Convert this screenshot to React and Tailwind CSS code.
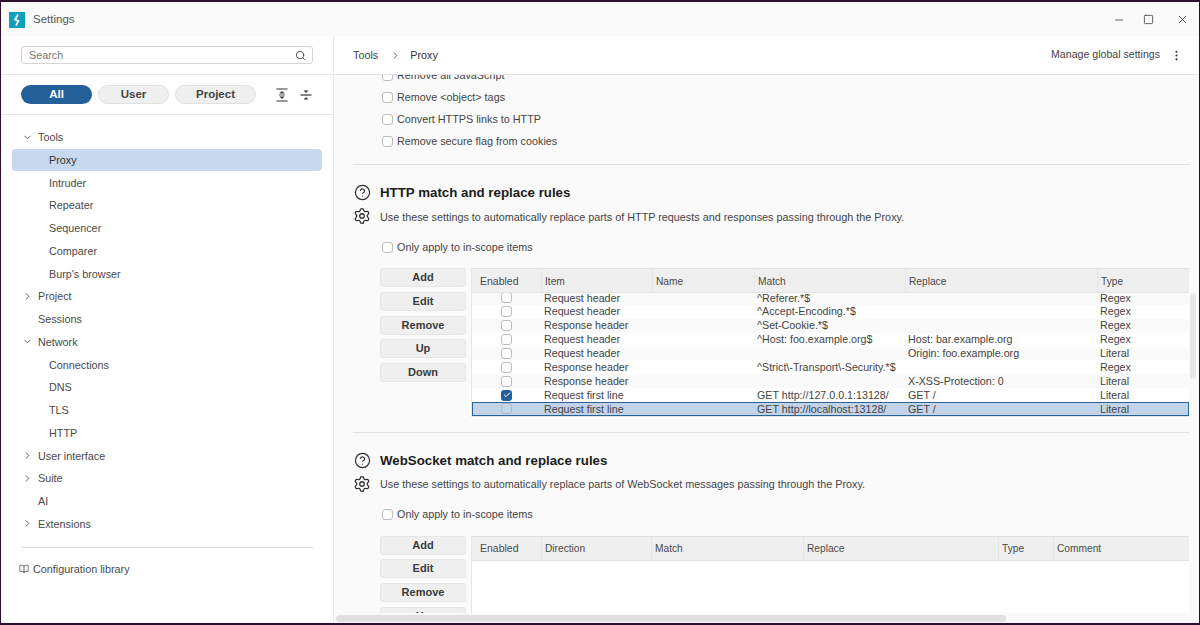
import { BookOpen, Check, ChevronDown, ChevronRight, EllipsisVertical, Minus, Search, Settings, CircleHelp, Square, X } from "lucide-react";

const NAV = [
  { label: "Tools", level: 0, arrow: "down" },
  { label: "Proxy", level: 1, active: true },
  { label: "Intruder", level: 1 },
  { label: "Repeater", level: 1 },
  { label: "Sequencer", level: 1 },
  { label: "Comparer", level: 1 },
  { label: "Burp's browser", level: 1 },
  { label: "Project", level: 0, arrow: "right" },
  { label: "Sessions", level: 0 },
  { label: "Network", level: 0, arrow: "down" },
  { label: "Connections", level: 1 },
  { label: "DNS", level: 1 },
  { label: "TLS", level: 1 },
  { label: "HTTP", level: 1 },
  { label: "User interface", level: 0, arrow: "right" },
  { label: "Suite", level: 0, arrow: "right" },
  { label: "AI", level: 0 },
  { label: "Extensions", level: 0, arrow: "right" }
];

const RULES = [
  ["Request header", "^Referer.*$", "", "Regex"],
  ["Request header", "^Accept-Encoding.*$", "", "Regex"],
  ["Response header", "^Set-Cookie.*$", "", "Regex"],
  ["Request header", "^Host: foo.example.org$", "Host: bar.example.org", "Regex"],
  ["Request header", "", "Origin: foo.example.org", "Literal"],
  ["Response header", "^Strict\\-Transport\\-Security.*$", "", "Regex"],
  ["Response header", "", "X-XSS-Protection: 0", "Literal"],
  ["Request first line", "GET http://127.0.0.1:13128/", "GET /", "Literal"],
  ["Request first line", "GET http://localhost:13128/", "GET /", "Literal"]
];

const HTTP_COLUMNS = ["Enabled", "Item", "Name", "Match", "Replace", "Type"];
const WS_COLUMNS = ["Enabled", "Direction", "Match", "Replace", "Type", "Comment"];

function Box({ checked, faint }) {
  if (checked) {
    return (
      <span className="flex h-[11px] w-[11px] items-center justify-center rounded-[3px] bg-[#23609a]">
        <Check size={8} strokeWidth={3} className="text-white" />
      </span>
    );
  }
  return (
    <span className={`block h-[11px] w-[11px] rounded-[3px] border ${faint ? "border-[#aab9cf]" : "border-[#bdbdbd] bg-white"}`} />
  );
}

function CheckRow({ label }) {
  return (
    <div className="flex h-[22px] items-center gap-[4px] pl-[29px] text-[10.8px] text-[#444]">
      <Box />
      <span>{label}</span>
    </div>
  );
}

function SideButton({ label }) {
  return (
    <button type="button" className="h-[19px] w-[86px] shrink-0 rounded-[3px] border border-[#e6e6e6] bg-[#efefef] text-[11px] font-bold leading-none text-[#3b3b3b]">
      {label}
    </button>
  );
}

function SectionHead({ title, text }) {
  return (
    <div className="flex">
      <div className="flex w-[27px] shrink-0 flex-col items-center gap-[6px] pr-[9px] pt-[19px] text-[#2e2e2e]">
        <CircleHelp size={17} strokeWidth={1.7} />
        <Settings size={18} strokeWidth={1.7} />
      </div>
      <div className="pt-[18px]">
        <h2 className="flex h-[20px] items-center text-[13.3px] font-bold text-[#1c1c1c]">{title}</h2>
        <p className="mt-[4px] flex h-[20px] items-center text-[10.8px] text-[#444]">{text}</p>
      </div>
    </div>
  );
}

function TableHeader({ columns, template }) {
  return (
    <div className={`grid h-[25px] border-y border-[#e2e2e2] bg-[#efefef] ${template}`}>
      {columns.map((col, i) => (
        <div key={col} className={`flex items-center pl-[3px] pt-[2px] text-[10.2px] text-[#4a4a4a] ${i === 0 ? "pl-[8px] text-[10.5px]" : "border-l border-[#e4e4e4]"}`}>
          {col}
        </div>
      ))}
    </div>
  );
}

function ExpandIcon() {
  return (
    <svg width="12" height="14" viewBox="0 0 12 14" className="text-[#333]">
      <path d="M0.5 1h11M0.5 13h11" stroke="currentColor" strokeWidth="1.2" />
      <path d="M6 3l2.6 2.6H3.4zM6 11l2.6-2.6H3.4z" fill="currentColor" />
      <path d="M3 7h6" stroke="currentColor" strokeWidth="0.8" />
    </svg>
  );
}

function CollapseIcon() {
  return (
    <svg width="12" height="14" viewBox="0 0 12 14" className="text-[#333]">
      <path d="M0.5 7h11" stroke="currentColor" strokeWidth="1.2" />
      <path d="M6 5l2.4-2.6H3.6zM6 9l2.4 2.6H3.6z" fill="currentColor" />
    </svg>
  );
}

function Sidebar() {
  return (
    <aside className="flex w-[333px] shrink-0 flex-col border-r border-[#e8e8e8] bg-white">
      <div className="flex h-[39px] items-center border-b border-[#e6e6e6] px-[20px]">
        <div className="flex h-[18px] w-[292px] items-center justify-between rounded-[3px] border border-[#d4d4d4] bg-white pl-[7px] pr-[6px]">
          <span className="text-[10.8px] text-[#777]">Search</span>
          <Search size={11} className="text-[#444]" />
        </div>
      </div>
      <div className="flex h-[40px] items-center border-b border-[#e6e6e6] pl-[20px]">
        <button type="button" className="h-[19px] w-[71px] rounded-full bg-[#23609a] text-[11.5px] font-bold text-white">All</button>
        <button type="button" className="ml-[6px] h-[19px] w-[71px] rounded-full border border-[#e2e2e2] bg-[#efefef] text-[11.5px] font-bold text-[#444]">User</button>
        <button type="button" className="ml-[6px] h-[19px] w-[81px] rounded-full border border-[#e2e2e2] bg-[#efefef] text-[11.5px] font-bold text-[#444]">Project</button>
        <div className="ml-[20px] flex items-center gap-[12px]">
          <ExpandIcon />
          <CollapseIcon />
        </div>
      </div>
      <nav className="px-[11px] pt-[10.75px]">
        {NAV.map((item) => (
          <div
            key={item.label}
            className={`flex h-[22.75px] items-center rounded-[4px] text-[10.8px] text-[#4a4a4a] ${item.active ? "bg-[#c8d9ef] text-[#333]" : ""} ${item.level === 1 ? "pl-[37px]" : "pl-[10px]"}`}
          >
            {item.level === 0 && (
              <span className="flex w-[16px] shrink-0 items-center">
                {item.arrow === "down" && <ChevronDown size={11} strokeWidth={1.8} className="text-[#444]" />}
                {item.arrow === "right" && <ChevronRight size={11} strokeWidth={1.8} className="text-[#444]" />}
              </span>
            )}
            {item.label}
          </div>
        ))}
      </nav>
      <div className="mx-[20px] mt-[11.75px] border-t border-[#dcdcdc]" />
      <div className="mx-[11px] mt-[10px] flex h-[22px] items-center gap-[4px] pl-[7px] text-[10.8px] text-[#4a4a4a]">
        <BookOpen size={10} strokeWidth={1.8} />
        Configuration library
      </div>
    </aside>
  );
}

export default function App() {
  const httpGrid = "grid-cols-[69px_111px_102px_151px_192px_1fr]";
  const wsGrid = "grid-cols-[69px_110px_152px_195px_55px_1fr]";

  return (
    <div className="flex h-[625px] w-[1200px] flex-col overflow-hidden bg-[#2c0f2b] pb-[2px] pl-[1px] pr-[1px] pt-[2px] font-['Liberation_Sans',Arial,sans-serif]">
      <header className="flex h-[34px] shrink-0 items-center bg-[#fafafa] pl-[8px] pt-px">
        <svg width="16" height="16" viewBox="0 0 16 16">
          <rect width="16" height="16" fill="#10a0b8" />
          <path d="M9 2.5L6 7.5l3.5 1.5-2.5 4.5" fill="none" stroke="#fff" strokeWidth="1.7" />
        </svg>
        <span className="ml-[8px] text-[11.5px] text-[#555]">Settings</span>
        <div className="ml-auto flex items-center gap-[18px] pr-[10px] text-[#2e2e2e]">
          <Minus size={12} strokeWidth={1.5} />
          <Square size={11} strokeWidth={1.6} />
          <X size={13} strokeWidth={1.5} className="ml-[4px]" />
        </div>
      </header>

      <div className="flex min-h-0 flex-1">
        <Sidebar />

        <main className="flex min-w-0 flex-1 flex-col bg-[#fafafa]">
          <div className="flex h-[39px] shrink-0 items-center border-b border-[#e4e4e4] bg-white pl-[19px] pr-[16px] text-[10.8px] text-[#444]">
            <span>Tools</span>
            <ChevronRight size={11} strokeWidth={1.6} className="ml-[12px] text-[#333]" />
            <span className="ml-[9px] text-[#333]">Proxy</span>
            <span className="ml-auto text-[10.6px]">Manage global settings</span>
            <EllipsisVertical size={13} strokeWidth={2} className="ml-[10px] text-[#333]" />
          </div>

          <div className="min-h-0 flex-1 overflow-hidden pl-[19px] pr-[9px]">
            <div className="-mt-[11px]">
              <CheckRow label="Remove all JavaScript" />
              <CheckRow label="Remove <object> tags" />
              <CheckRow label="Convert HTTPS links to HTTP" />
              <CheckRow label="Remove secure flag from cookies" />
            </div>
            <div className="mt-[12px] border-t border-[#e0e0e0]" />

            <SectionHead
              title="HTTP match and replace rules"
              text="Use these settings to automatically replace parts of HTTP requests and responses passing through the Proxy."
            />
            <div className="mt-[9px]"><CheckRow label="Only apply to in-scope items" /></div>
            <div className="mt-[10px] flex pl-[27px]">
              <div className="flex w-[92px] shrink-0 flex-col gap-[4.75px]">
                {["Add", "Edit", "Remove", "Up", "Down"].map((b) => <SideButton key={b} label={b} />)}
              </div>
              <div className="-ml-px w-[718px] shrink-0 border-b border-l border-[#e6e6e6] bg-white">
                <TableHeader columns={HTTP_COLUMNS} template={httpGrid} />
                <div className="h-[123px] overflow-hidden">
                  <div className="-mt-[2px]">
                    {RULES.map((rule, i) => {
                      const selected = i === 8;
                      const checked = i === 7;
                      return (
                        <div
                          key={rule[1] + i}
                          className={`grid h-[13.875px] items-center text-[10.7px] leading-none text-[#444] ${httpGrid} ${selected ? "bg-[#c2d3ea] text-[#222] outline outline-[#2a6496] -outline-offset-1" : i % 2 === 0 ? "bg-[#fafafa]" : "bg-white"}`}
                        >
                          <div className="flex justify-center"><Box checked={checked} faint={selected} /></div>
                          <div className="pl-[3px]">{rule[0]}</div>
                          <div />
                          <div className="pl-[3px]">{rule[1]}</div>
                          <div className="pl-[3px]">{rule[2]}</div>
                          <div className="pl-[3px]">{rule[3]}</div>
                        </div>
                      );
                    })}
                  </div>
                </div>
              </div>
              <div className="ml-[1px] pt-[25px]">
                <div className="h-[86px] w-[6px] rounded-[3px] bg-[#e6e6e6]" />
              </div>
            </div>
            <div className="mt-[14.5px] border-t border-[#e0e0e0]" />

            <SectionHead
              title="WebSocket match and replace rules"
              text="Use these settings to automatically replace parts of WebSocket messages passing through the Proxy."
            />
            <div className="mt-[9px]"><CheckRow label="Only apply to in-scope items" /></div>
            <div className="mt-[10px] flex pl-[27px]">
              <div className="flex w-[92px] shrink-0 flex-col gap-[4.75px]">
                {["Add", "Edit", "Remove", "Up"].map((b) => <SideButton key={b} label={b} />)}
              </div>
              <div className="-ml-px h-[90px] w-[718px] shrink-0 border-l border-[#e6e6e6] bg-white">
                <TableHeader columns={WS_COLUMNS} template={wsGrid} />
              </div>
            </div>
          </div>

          <div className="flex h-[10px] shrink-0 items-center pl-[2px]">
            <div className="h-[7px] w-[670px] rounded-[4px] bg-[#e0e0e0]" />
          </div>
        </main>
      </div>
    </div>
  );
}
